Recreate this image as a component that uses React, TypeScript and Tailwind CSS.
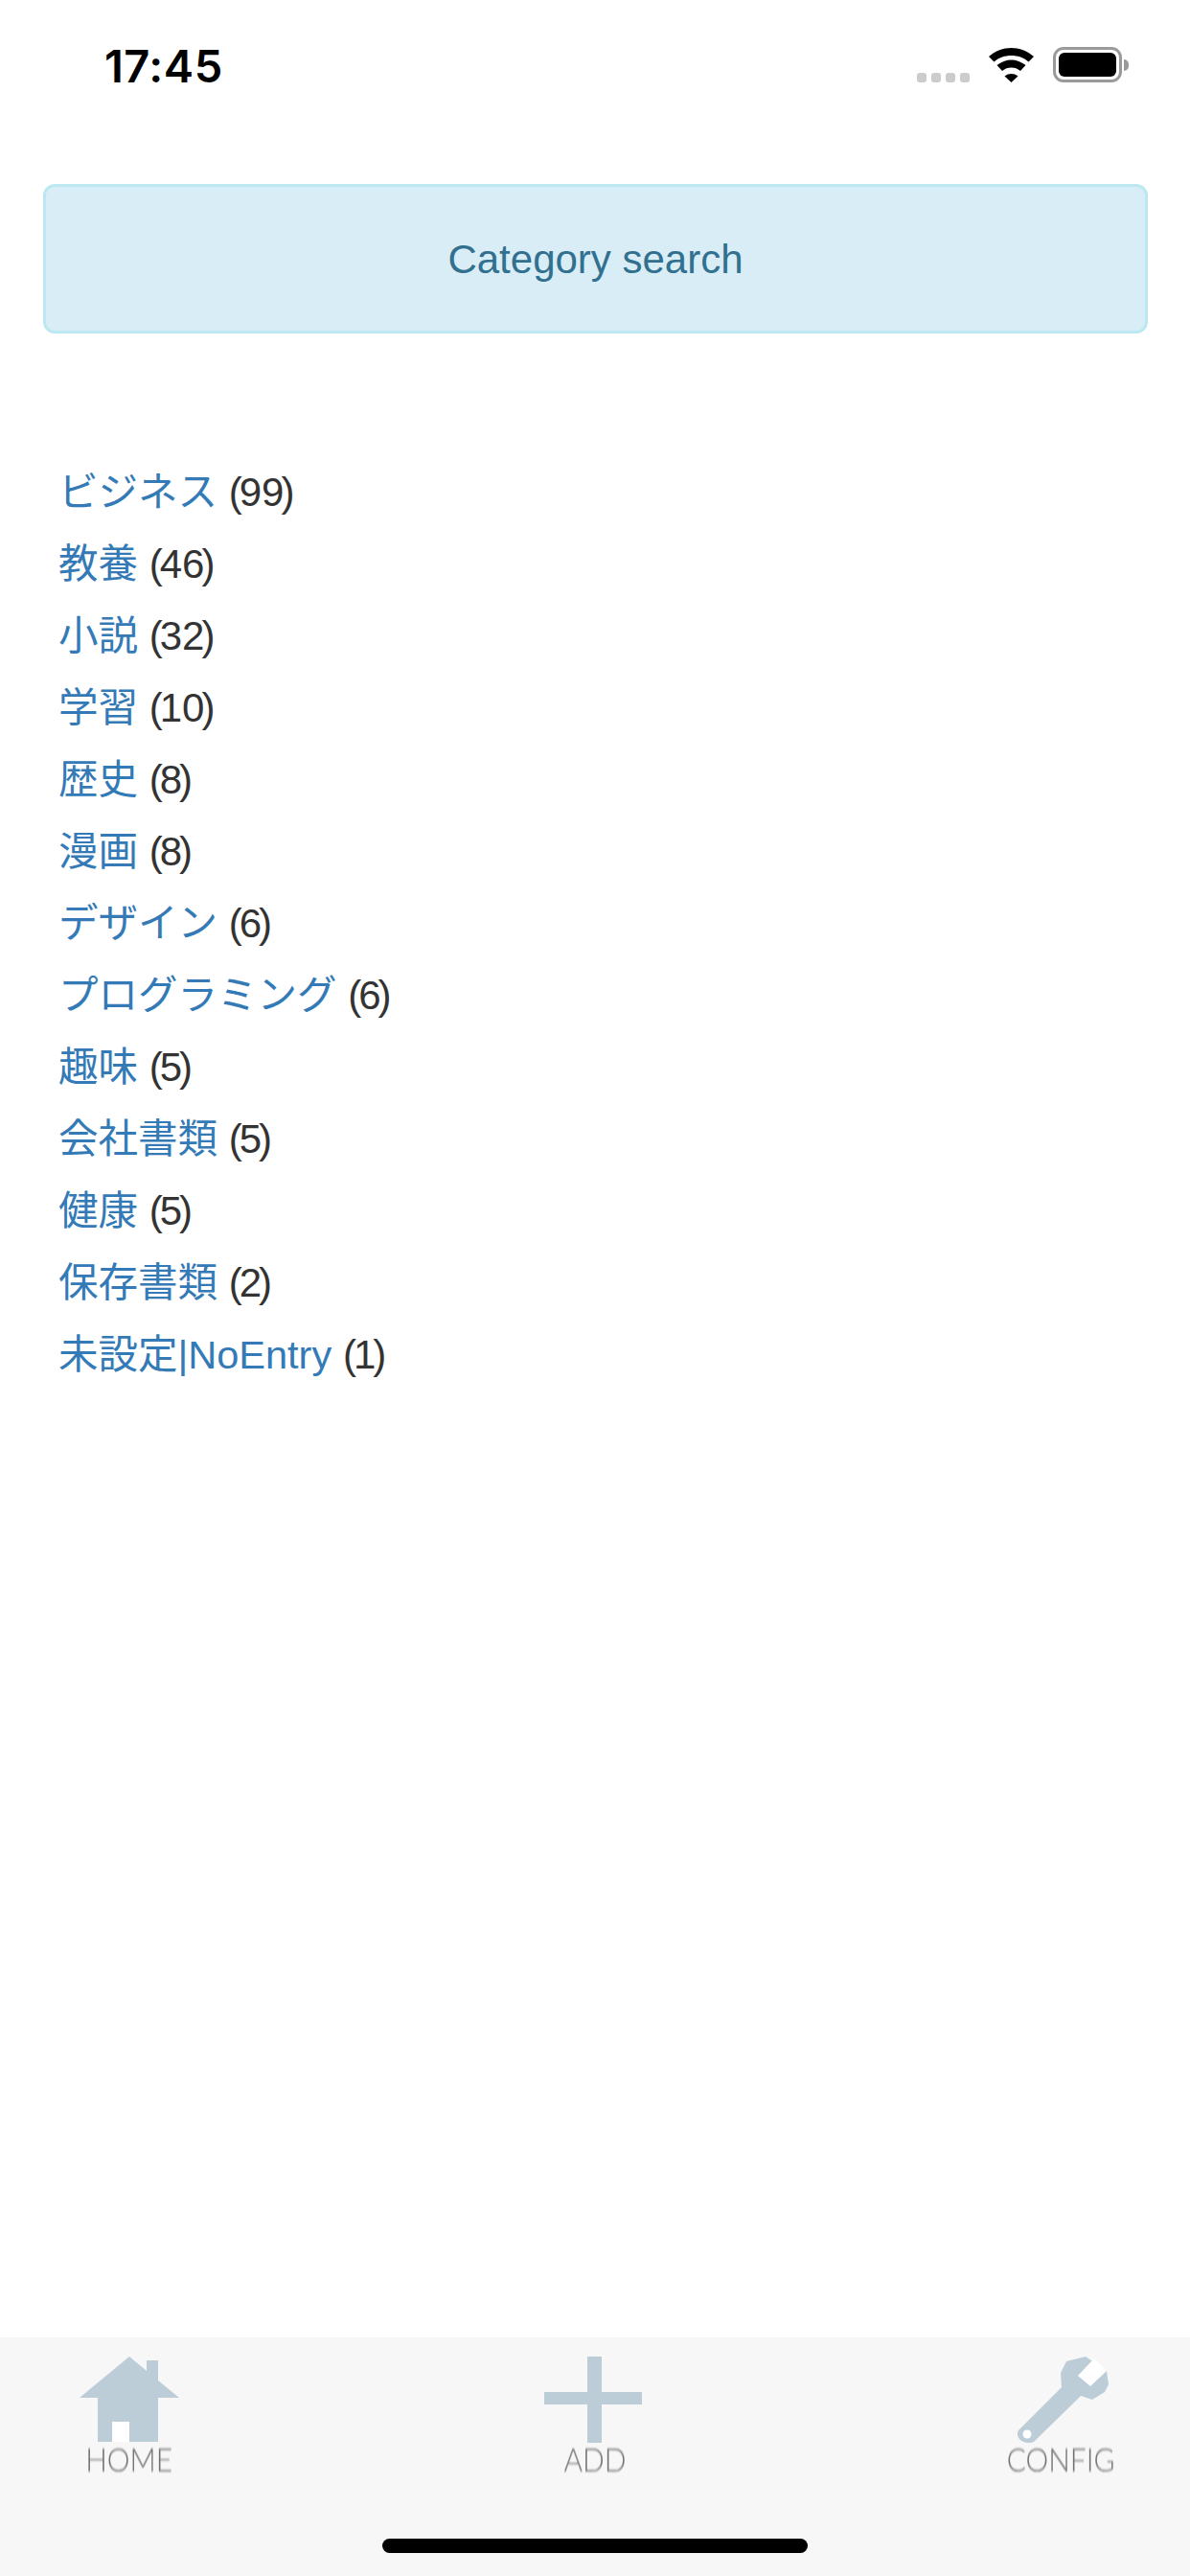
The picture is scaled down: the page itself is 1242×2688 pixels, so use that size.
const categories: { name: string; count: number }[] = [
  { name: "ビジネス", count: 99 },
  { name: "教養", count: 46 },
  { name: "小説", count: 32 },
  { name: "学習", count: 10 },
  { name: "歴史", count: 8 },
  { name: "漫画", count: 8 },
  { name: "デザイン", count: 6 },
  { name: "プログラミング", count: 6 },
  { name: "趣味", count: 5 },
  { name: "会社書類", count: 5 },
  { name: "健康", count: 5 },
  { name: "保存書類", count: 2 },
  { name: "未設定|NoEntry", count: 1 },
];

function StatusBar() {
  return (
    <div className="flex h-[132px] shrink-0 items-start justify-between pl-[109px] pr-[64px] pt-[49px]">
      <span className="font-['Inter',sans-serif] text-[47px] font-semibold leading-[40px] tracking-[0.5px] text-black">17:45</span>
      <div className="flex items-end">
        <div className="flex gap-[5px]">
          <span className="h-[10px] w-[10px] rounded-[3px] bg-[#cccccc]"></span>
          <span className="h-[10px] w-[10px] rounded-[3px] bg-[#cccccc]"></span>
          <span className="h-[10px] w-[10px] rounded-[3px] bg-[#cccccc]"></span>
          <span className="h-[10px] w-[10px] rounded-[3px] bg-[#cccccc]"></span>
        </div>
        <svg className="ml-[20px]" width="47" height="36" viewBox="0 0 47 36" fill="#000">
          <path d="M23.5 0C32 0 40 3 47 9L41.5 14.5C36.5 10 30 8 23.5 8C17 8 10.5 10 5.5 14.5L0 9C7 3 15 0 23.5 0Z" />
          <path d="M23.5 12.5C28.5 12.5 34 14.5 38.5 18L33 24C30 21.5 27 20.5 23.5 20.5C20 20.5 17 21.5 14 24L8.5 18C13 14.5 18.5 12.5 23.5 12.5Z" />
          <path d="M23.5 27C26 27 28.5 27.8 30.5 29.5L23.5 36L16.5 29.5C18.5 27.8 21 27 23.5 27Z" />
        </svg>
        <div className="ml-[20px] flex items-center">
          <div className="h-[37px] w-[72px] rounded-[11px] border-[3px] border-[#9a9a9a] p-[3px]">
            <div className="h-full w-full rounded-[6px] bg-black"></div>
          </div>
          <div className="ml-[2px] h-[12px] w-[5px] rounded-r-[5px] bg-[#9a9a9a]"></div>
        </div>
      </div>
    </div>
  );
}

function HomeIcon() {
  return (
    <svg width="104" height="90" viewBox="0 0 104 90" className="blur-[0.7px]">
      <path d="M52 0L70 15L70 4L82 4L82 25L104 43L82 43L82 89L19 89L19 43L0 43Z" fill="#bccdd8" />
      <rect x="34" y="68" width="18" height="21" fill="#ffffff" />
    </svg>
  );
}

function AddIcon() {
  return (
    <svg width="102" height="90" viewBox="0 0 102 90" className="blur-[0.7px]">
      <rect x="45" y="0" width="15" height="90" fill="#bccdd8" />
      <rect x="0" y="37" width="102" height="13" fill="#bccdd8" />
    </svg>
  );
}

function ConfigIcon() {
  return (
    <svg width="96" height="90" viewBox="0 0 96 90" className="ml-[5px] blur-[0.7px]">
      <path d="M46 32L45 17L51 5L71 0L93 15L95 29L91 37L78 45L66 41L60 47L17 89C12 91 5 90 2 86C-1 82 0 78 1 77Z" fill="#bccdd8" />
      <path d="M63 20L80 2L93 15L76 31Z" fill="#ffffff" />
      <circle cx="10" cy="81" r="4.5" fill="#ffffff" />
    </svg>
  );
}

function TabLabel({ children, className = "" }: { children: string; className?: string }) {
  return (
    <span className={`-mt-[2px] scale-x-[0.88] font-['Lato',sans-serif] text-[34px] font-light leading-[38px] text-[#707070] blur-[0.8px] ${className}`}>
      {children}
    </span>
  );
}

export default function App() {
  return (
    <main className="flex h-[2688px] w-[1242px] flex-col bg-white font-['Liberation_Sans','Noto_Sans_CJK_JP',sans-serif]">
      <StatusBar />

      <div className="ml-[45px] mr-[44px] mt-[60px] flex h-[156px] shrink-0 items-center justify-center rounded-[12px] border-[3px] border-[#bce8f1] bg-[#d9edf7] text-[42px] text-[#31708f]">
        Category search
      </div>

      {/* Category list */}
      <ul className="mt-[128px] flex flex-col pl-[61px] text-[42px] leading-[75px] text-[#333333]">
        {categories.map((category) => (
          <li key={category.name} className="h-[75px]">
            <a className="text-[41.5px] text-[#337ab7]">{category.name}</a>{" "}
            <span className="-mr-[3px]">(</span>{category.count}<span className="-ml-[3px]">)</span>
          </li>
        ))}
      </ul>

      {/* Bottom tab bar */}
      <footer className="relative mt-auto h-[249px] shrink-0 bg-[#f7f7f7] pt-[20px]">
        <div className="flex items-start justify-between pl-[83px] pr-[77px]">
          <div className="flex w-[104px] flex-col items-center">
            <HomeIcon />
            <TabLabel>HOME</TabLabel>
          </div>
          <div className="flex w-[102px] flex-col items-center">
            <AddIcon />
            <TabLabel className="ml-[5px]">ADD</TabLabel>
          </div>
          <div className="flex w-[115px] flex-col items-center">
            <ConfigIcon />
            <TabLabel>CONFIG</TabLabel>
          </div>
        </div>
        <div className="absolute bottom-[24px] left-[399px] h-[15px] w-[444px] rounded-[8px] bg-black"></div>
      </footer>
    </main>
  );
}
